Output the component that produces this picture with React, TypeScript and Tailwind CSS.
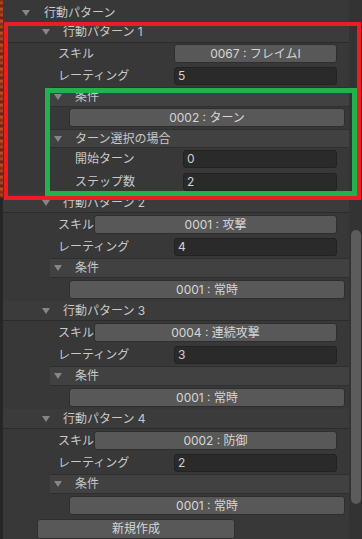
import React from "react";

type Pattern = {
  no: number;
  skill: string;
  rating: string;
  cond: string;
};

const patterns: Pattern[] = [
  { no: 2, skill: "0001 : 攻撃", rating: "4", cond: "0001 : 常時" },
  { no: 3, skill: "0004 : 連続攻撃", rating: "3", cond: "0001 : 常時" },
  { no: 4, skill: "0002 : 防御", rating: "2", cond: "0001 : 常時" },
];

// foldout arrow
const Arrow = () => (
  <svg width="8" height="6" viewBox="0 0 8 6" className="shrink-0">
    <path d="M0 0h8L4 6z" fill="#868686" />
  </svg>
);

const Button = ({ label, className }: { label: string; className: string }) => (
  <div
    className={
      "h-[19px] rounded-[3px] border border-[#2e2e2e] bg-[#585858] flex items-center justify-center text-[#d6d6d6] " +
      className
    }
  >
    {label}
  </div>
);

const Field = ({ value, className }: { value: string; className: string }) => (
  <div
    className={
      "h-[18px] rounded-[3px] border border-[#222222] bg-[#2a2a2a] flex items-center pl-[3px] text-[#d0d0d0] " +
      className
    }
  >
    {value}
  </div>
);

const PatternHeader = ({ no }: { no: number }) => (
  <div className="h-[20px] flex items-center pl-[39px] gap-[13px] bg-[#3b3b3b] border-b border-[#2b2b2b]">
    <Arrow />
    <span>行動パターン {no}</span>
  </div>
);

const SubHeader = ({ label }: { label: string }) => (
  <div className="h-[20px] ml-[47px] flex items-center pl-[4px] gap-[13px] bg-[#414141] border-y border-[#2f2f2f]">
    <Arrow />
    <span>{label}</span>
  </div>
);

function App() {
  return (
    <div className="relative w-[362px] h-[539px] overflow-hidden bg-[#383838] flex font-['Inter','Noto_Sans_CJK_JP',sans-serif] text-[12px] text-[#c8c8c8] leading-none">
      {/* left edge */}
      <div className="w-[3px] flex flex-col">
        <div className="h-[198px] bg-[repeating-linear-gradient(180deg,#7a2812_0px,#b34a1e_3px,#5e1c0c_6px,#c0582a_9px,#7a2812_12px)]" />
        <div className="flex-1 bg-[#262626]" />
      </div>

      <div className="flex-1 flex flex-col">
        {/* top foldout */}
        <div className="h-[20px] mt-[3px] flex items-center pl-[19px] gap-[14px]">
          <Arrow />
          <span>行動パターン</span>
        </div>

        {/* pattern 1 */}
        <PatternHeader no={1} />
        <div className="h-[23px] flex items-center pl-[55px] pr-[12px]">
          <span className="w-[116px]">スキル</span>
          <Button label="0067 : フレイムI" className="flex-1" />
        </div>
        <div className="h-[22px] flex items-center pl-[55px] pr-[12px]">
          <span className="w-[116px]">レーティング</span>
          <Field value="5" className="flex-1" />
        </div>
        <SubHeader label="条件" />
        <div className="h-[22px] flex items-center pl-[66px] pr-[4px]">
          <Button label="0002 : ターン" className="flex-1" />
        </div>
        <SubHeader label="ターン選択の場合" />
        <div className="h-[22px] flex items-center pl-[72px] pr-[12px]">
          <span className="w-[108px]">開始ターン</span>
          <Field value="0" className="flex-1" />
        </div>
        <div className="h-[23px] flex items-center pl-[72px] pr-[12px]">
          <span className="w-[108px]">ステップ数</span>
          <Field value="2" className="flex-1" />
        </div>

        {patterns.map((p) => (
          <div key={p.no} className="flex flex-col">
            <PatternHeader no={p.no} />
            <div className="h-[23px] flex items-center pl-[55px] pr-[12px]">
              <span className="w-[36px]">スキル</span>
              <Button label={p.skill} className="flex-1" />
            </div>
            <div className="h-[22px] flex items-center pl-[55px] pr-[12px]">
              <span className="w-[116px]">レーティング</span>
              <Field value={p.rating} className="flex-1" />
            </div>
            <SubHeader label="条件" />
            <div className="h-[23px] flex items-center pl-[66px] pr-[4px]">
              <Button label={p.cond} className="flex-1" />
            </div>
          </div>
        ))}

        <div className="mt-[2px] pl-[34px]">
          <Button label="新規作成" className="w-[198px] h-[20px]" />
        </div>
      </div>

      {/* scrollbar */}
      <div className="w-[13px] bg-[#333333] flex flex-col items-center pt-[230px]">
        <div className="w-[10px] h-[274px] rounded-full bg-[#5c5c5c] ml-[1px]" />
      </div>

      {/* annotation boxes */}
      <div className="pointer-events-none absolute left-[4px] top-[22px] w-[357px] h-[178px] border-4 border-[#ec1c24]" />
      <div className="pointer-events-none absolute left-[45px] top-[88px] w-[312px] h-[108px] border-[5px] border-[#22b14c]" />
    </div>
  );
}

export default App;
